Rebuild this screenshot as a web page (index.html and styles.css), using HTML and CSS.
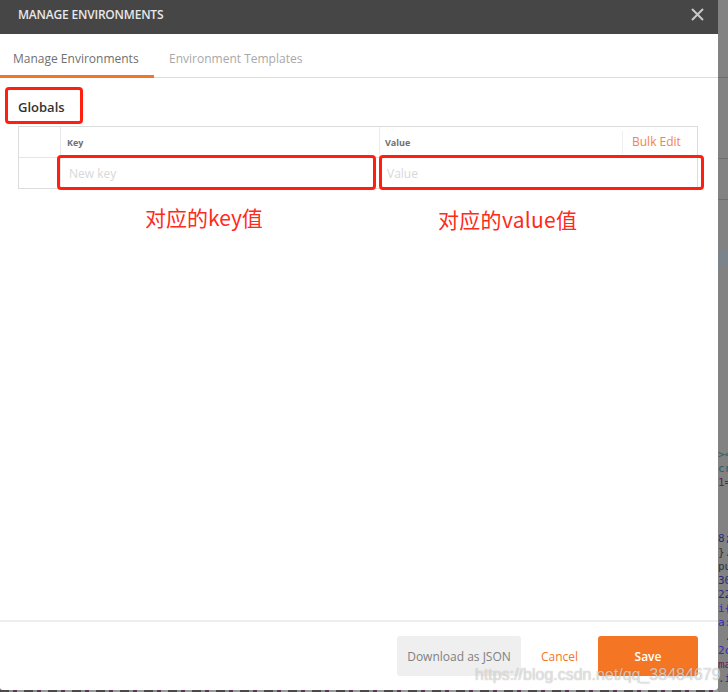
FILE: index.html
```html
<!DOCTYPE html>
<html lang="en">
<head>
  <meta charset="UTF-8">
  <meta name="viewport" content="width=device-width, initial-scale=1.0">
  <title>Manage Environments</title>
  <link rel="stylesheet" href="styles.css">
</head>
<body>
  <div class="left-side">
    <div class="modal">
      <div class="modal-header">
        <span class="modal-title">MANAGE ENVIRONMENTS</span>
        <svg class="close-icon" width="13" height="13" viewBox="0 0 13 13"><path d="M1 1 12 12M12 1 1 12" stroke="#c8c8c8" stroke-width="2" fill="none"/></svg>
      </div>

      <div class="tabs">
        <div class="tab tab-active">Manage Environments</div>
        <div class="tab">Environment Templates</div>
      </div>

      <div class="modal-body">
        <h2 class="globals-title">Globals</h2>
        <div class="kv-table">
          <div class="kv-row kv-head">
            <div class="kv-check"></div>
            <div class="kv-key">Key</div>
            <div class="kv-value">Value</div>
            <div class="kv-bulk"><span>Bulk Edit</span></div>
          </div>
          <div class="kv-row">
            <div class="kv-check"></div>
            <div class="kv-key kv-empty">New key</div>
            <div class="kv-value kv-empty">Value</div>
          </div>
        </div>
      </div>

      <div class="modal-footer">
        <button class="btn btn-grey">Download as JSON</button>
        <button class="btn btn-link">Cancel</button>
        <button class="btn btn-save">Save</button>
      </div>
    </div>
    <div class="page-below"></div>
  </div>

  <div class="code-strip">
    <div class="code-line teal">&gt;&lt;</div>
    <div class="code-line teal">cr</div>
    <div class="code-line plum">1=</div>
    <div class="code-line"></div>
    <div class="code-line"></div>
    <div class="code-line"></div>
    <div class="code-line navy">8;</div>
    <div class="code-line ink">}.</div>
    <div class="code-line ink">pu</div>
    <div class="code-line navy">30</div>
    <div class="code-line navy">22</div>
    <div class="code-line blue">i{</div>
    <div class="code-line blue">a:</div>
    <div class="code-line ink">&nbsp;.</div>
    <div class="code-line blue">2c</div>
    <div class="code-line plum">ma</div>
    <div class="code-line navy">.i</div>
  </div>

  <!-- red annotations drawn over the screenshot -->
  <div class="mark mark-globals"></div>
  <div class="mark mark-key"></div>
  <div class="mark mark-value"></div>
  <div class="note note-key">对应的key值</div>
  <div class="note note-value">对应的value值</div>
  <div class="watermark">https://blog.csdn.net/qq_38484679</div>
</body>
</html>
```

FILE: styles.css
```css
* {
  margin: 0;
  padding: 0;
  box-sizing: border-box;
}

body {
  font-family: 'Open Sans', sans-serif;
  background-color: #828282;
  display: flex;
  height: 692px;
  overflow: hidden;
  position: relative;
}

.left-side {
  width: 718px;
  flex-shrink: 0;
}

.modal {
  height: 690px;
  background: #fff;
  display: flex;
  flex-direction: column;
  border-radius: 0 0 3px 3px;
}

.page-below {
  height: 2px;
  background: repeating-linear-gradient(90deg, #4a4a4a 0 9px, #8c8c8c 9px 13px, #5a3a50 13px 17px, #9a9a9a 17px 24px);
}

.modal-header {
  height: 34px;
  background: #464646;
  display: flex;
  justify-content: space-between;
  align-items: center;
  padding: 0 14px 6px 18px;
}

.modal-title {
  font-size: 12px;
  font-weight: 600;
  letter-spacing: -0.2px;
  color: #e8e8e8;
}

/* Tabs */
.tabs {
  height: 44px;
  display: flex;
  border-bottom: 1px solid #dcdcdc;
}

.tab {
  padding: 0 14px 0 15px;
  font-size: 12px;
  line-height: 49px;
  color: #a8a8a8;
}

.tab-active {
  width: 154px;
  padding: 0 0 0 13px;
  color: #707070;
  height: 44px;
  border-bottom: 3px solid #f47526;
}

/* Body */
.modal-body {
  flex: 1;
  padding: 0 20px 0 18px;
}

.globals-title {
  font-size: 13px;
  font-weight: 600;
  color: #333;
  line-height: 17px;
  margin: 21px 0 10px;
}

.kv-table {
  border: 1px solid #dcdcdc;
}

.kv-row {
  display: flex;
  height: 30px;
}

.kv-row + .kv-row {
  border-top: 1px solid #e4e4e4;
  height: 31px;
}

.kv-check {
  width: 42px;
  border-right: 1px solid #e8e8e8;
}

.kv-key {
  width: 319px;
  padding-left: 6px;
  border-right: 1px solid #ececec;
  font-size: 9px;
  font-weight: 700;
  line-height: 31px;
  color: #707070;
}

.kv-value {
  flex: 1;
  padding-left: 5px;
  font-size: 9px;
  font-weight: 700;
  line-height: 31px;
  color: #707070;
}

.kv-empty {
  font-size: 12px;
  font-weight: 400;
  line-height: 31px;
  color: #d8d8d8;
  padding-left: 8px;
  border-right: none;
}

.kv-value.kv-empty {
  padding-left: 7px;
}

.kv-bulk {
  width: 75px;
  height: 23px;
  margin-top: 4px;
  padding-left: 9px;
  border-left: 1px solid #f0f0f0;
  font-size: 12px;
  line-height: 21px;
  color: #f4854a;
}

/* Footer */
.modal-footer {
  height: 70px;
  border-top: 2px solid #eeeeee;
  display: flex;
  align-items: flex-start;
  padding: 14px 20px 0 397px;
}

.btn {
  height: 40px;
  border: none;
  border-radius: 3px;
  font-family: 'Open Sans', sans-serif;
  font-size: 12px;
  background: none;
}

.btn-grey {
  width: 124px;
  background: #efefef;
  color: #808080;
}

.btn-link {
  width: 77px;
  color: #f47526;
}

.btn-save {
  width: 100px;
  background: #f47523;
  color: #fff;
  font-weight: 600;
}

/* What shows behind the dialog */
.code-strip {
  flex: 1;
  padding-top: 448px;
  font-family: 'DejaVu Sans Mono', monospace;
  font-size: 11px;
  line-height: 14px;
  overflow: hidden;
  white-space: nowrap;
  background:
    linear-gradient(#6f6f6f, #6f6f6f) 0 77px / 100% 1px no-repeat,
    linear-gradient(#6f6f6f, #6f6f6f) 0 158px / 100% 1px no-repeat,
    linear-gradient(#6f6f6f, #6f6f6f) 0 199px / 100% 1px no-repeat,
    linear-gradient(#7b848b, #7b848b) 0 250px / 100% 15px no-repeat;
}

.code-line {
  height: 14px;
}

.teal { color: #2c5f62; }
.plum { color: #5e2450; }
.navy { color: #2b2b78; }
.blue { color: #3a2ab0; }
.ink { color: #333; }

/* Annotations */
.mark {
  position: absolute;
  border: 3px solid #ff1f10;
  border-radius: 4px;
}

.mark-globals {
  left: 5px;
  top: 87px;
  width: 78px;
  height: 37px;
}

.mark-key {
  left: 57px;
  top: 155px;
  width: 319px;
  height: 35px;
}

.mark-value {
  left: 379px;
  top: 155px;
  width: 325px;
  height: 35px;
}

.note {
  position: absolute;
  font-family: 'Noto Sans CJK SC', sans-serif;
  font-size: 21px;
  line-height: 24px;
  color: #ff2a1a;
  white-space: nowrap;
}

.note-key {
  left: 145px;
  top: 205px;
}

.note-value {
  left: 438px;
  top: 207px;
  letter-spacing: 0.3px;
}

.watermark {
  position: absolute;
  left: 475px;
  top: 665px;
  font-family: 'Liberation Sans', sans-serif;
  font-size: 16px;
  line-height: 20px;
  color: rgba(255, 255, 255, 0.6);
  text-shadow: 0 0 1px rgba(90, 90, 90, 0.55);
  white-space: nowrap;
}
```
